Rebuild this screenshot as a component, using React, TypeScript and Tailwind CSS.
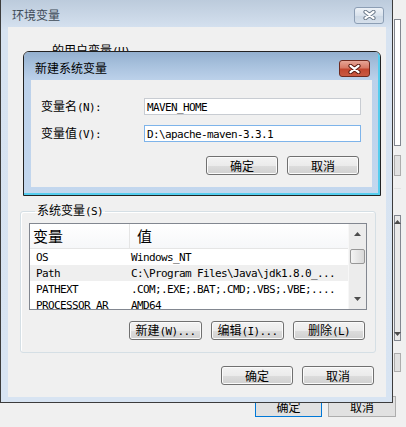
import React from "react";

const CJK = /[\u3000-\u303f\u4e00-\u9fff\uff00-\uffef]/;
const RUNS = /[\u3000-\u303f\u4e00-\u9fff\uff00-\uffef]+|[^\u3000-\u303f\u4e00-\u9fff\uff00-\uffef]+/g;

// SimSun-like text: CJK at 12px, ASCII half width (6px per char)
function T({
  s,
  cjk = "text-[12px]",
  mono = "text-[11px] tracking-[-0.62px]",
}: {
  s: string;
  cjk?: string;
  mono?: string;
}) {
  const parts = s.match(RUNS) ?? [];
  return (
    <span className="whitespace-pre leading-[12px]">
      {parts.map((p, i) =>
        CJK.test(p) ? (
          <span key={i} className={`font-['Noto_Sans_CJK_SC','Noto_Sans',sans-serif] ${cjk}`}>
            {p}
          </span>
        ) : (
          <span key={i} className={`font-['DejaVu_Sans_Mono','Liberation_Mono',monospace] ${mono}`}>
            {p}
          </span>
        )
      )}
    </span>
  );
}

function Btn({ label, w }: { label: string; w: string }) {
  return (
    <button
      type="button"
      className={`${w} h-[19px] rounded-[3px] border border-[#707070] bg-[linear-gradient(#f3f3f3_0%,#ebebeb_50%,#dddddd_50%,#d0d0d0_100%)] shadow-[inset_0_0_0_1px_#fbfbfb] flex items-center justify-center text-black`}
    >
      <T s={label} />
    </button>
  );
}

function CloseX({ dark, light }: { dark: string; light: string }) {
  return (
    <svg width="13" height="10" viewBox="0 0 13 10">
      <path d="M2.5 1.8 L10.5 8.2 M10.5 1.8 L2.5 8.2" stroke={dark} strokeWidth="4.2" strokeLinecap="round" />
      <path d="M2.5 1.8 L10.5 8.2 M10.5 1.8 L2.5 8.2" stroke={light} strokeWidth="2.2" strokeLinecap="round" />
    </svg>
  );
}

function Arrow({ up }: { up?: boolean }) {
  return (
    <svg width="7" height="4" viewBox="0 0 7 4">
      <path d={up ? "M0 4 L3.5 0 L7 4Z" : "M0 0 L3.5 4 L7 0Z"} fill="#4d4d4d" />
    </svg>
  );
}

const rows = [
  { name: "OS", value: "Windows_NT" },
  { name: "Path", value: "C:\\Program Files\\Java\\jdk1.8.0_...", sel: true },
  { name: "PATHEXT", value: ".COM;.EXE;.BAT;.CMD;.VBS;.VBE;...." },
  { name: "PROCESSOR_AR", value: "AMD64" },
];

function BackWindow() {
  return (
    <div className="absolute inset-0 bg-[#f0f0f0]">
      <div className="ml-[394px] w-[7px] pt-[19px] flex flex-col">
        <div className="h-[127px] border border-[#828790] bg-white" />
        <div className="mt-[9px] h-[21px] border border-[#adadad] bg-[#e1e1e1]" />
        <div className="mt-[12px] h-px bg-[#e2e2e2]" />
        <div className="mt-[26px] h-[126px] border border-[#828790] bg-[#e9e9e9] flex flex-col items-center justify-between py-[4px]">
          <Arrow up />
          <Arrow />
        </div>
        <div className="mt-[12px] h-[19px] border border-[#adadad] bg-[#e1e1e1]" />
      </div>
      <div className="mt-[24px] flex gap-[6px] pl-[255px]">
        <div className="w-[67px] h-[21px] border border-[#0078d7] bg-[#e1e1e1] flex items-center justify-center">
          <T s="确定" />
        </div>
        <div className="w-[68px] h-[21px] border border-[#adadad] bg-[#e1e1e1] flex items-center justify-center">
          <T s="取消" />
        </div>
      </div>
    </div>
  );
}

function EnvDialog() {
  return (
    <div className="absolute left-0 top-0 w-[393px] h-[403px] border-x border-b border-[#3c3c3c] bg-[linear-gradient(180deg,#bccbdc_0px,#ccd9e8_18px,#d7e3f1_30px,#d8e4f2_100%)] flex flex-col">
      <div className="h-[27px] flex items-center justify-between pl-[11px] pr-[8px]">
        <span className="mt-[3px] text-[#3f4b58]">
          <T s="环境变量" />
        </span>
        <div className="mt-[3px] w-[30px] h-[17px] rounded-[3px] border border-[#8c9eb4] bg-[linear-gradient(#edf2f7,#d9e2ec_50%,#cbd7e4_51%,#d6e0eb)] flex items-center justify-center">
          <CloseX dark="#6f7d8d" light="#ffffff" />
        </div>
      </div>
      <div className="ml-[7px] w-[378px] h-[370px] bg-[#f0f0f0]">
        <div className="h-[29px] pt-[17px] pl-[44px]">
          <T s="的用户变量(U)" />
        </div>
        <fieldset className="mt-[148px] ml-[12px] w-[356px] rounded-[3px] border border-[#d5dfe5] shadow-[inset_1px_1px_0_#ffffff] px-[8px] pt-[5px] pb-[12px]">
          <legend className="ml-[6px] px-[2px] leading-[12px]">
            <T s="系统变量(S)" />
          </legend>
          <div className="h-[87px] border border-[#828790] bg-white flex overflow-hidden">
            <div className="flex-1 flex flex-col">
              <div className="h-[25px] shrink-0 flex border-b border-[#e5e5e5] bg-[linear-gradient(#ffffff,#f6f7f9)]">
                <div className="w-[100px] border-r border-[#e5e5e5] pl-[3px] flex items-center">
                  <T s="变量" cjk="text-[15px]" />
                </div>
                <div className="flex-1 pl-[7px] flex items-center">
                  <T s="值" cjk="text-[15px]" />
                </div>
              </div>
              {rows.map((r) => (
                <div key={r.name} className={`h-[16px] shrink-0 flex items-center ${r.sel ? "bg-[#efefef]" : ""}`}>
                  <div className="w-[100px] pl-[6px]">
                    <T s={r.name} />
                  </div>
                  <div className="flex-1 pl-[1px]">
                    <T s={r.value} />
                  </div>
                </div>
              ))}
            </div>
            <div className="w-[18px] bg-[#ececec] border-l border-[#f7f7f7] flex flex-col items-center">
              <div className="h-[20px] flex items-center">
                <Arrow up />
              </div>
              <div className="mt-[5px] w-[15px] h-[15px] rounded-[2px] border border-[#979797] bg-[linear-gradient(90deg,#f4f4f4,#e6e6e6_50%,#d9d9d9)]" />
              <div className="flex-1" />
              <div className="h-[20px] flex items-center">
                <Arrow />
              </div>
            </div>
          </div>
          <div className="mt-[11px] flex justify-end gap-[9px] pr-[2px]">
            <Btn label="新建(W)..." w="w-[73px]" />
            <Btn label="编辑(I)..." w="w-[73px]" />
            <Btn label="删除(L)" w="w-[72px]" />
          </div>
        </fieldset>
        <div className="mt-[13px] flex justify-end gap-[9px] pr-[12px]">
          <Btn label="确定" w="w-[72px]" />
          <Btn label="取消" w="w-[72px]" />
        </div>
      </div>
    </div>
  );
}

function NewVarDialog() {
  return (
    <div className="absolute left-[23px] top-[51px] w-[358px] h-[145px] rounded-t-[6px] border border-[#222222] overflow-hidden">
      <div className="h-full border-r-2 border-b-2 border-[#55cdee] bg-[linear-gradient(180deg,#94b0cf_0px,#a9c2de_14px,#bcd1ea_28px,#c3d7ee_100%)] flex flex-col">
        <div className="h-[28px] flex items-center justify-between pl-[11px] pr-[8px]">
          <span className="mt-[3px]">
            <T s="新建系统变量" />
          </span>
          <div className="mt-[5px] w-[31px] h-[17px] rounded-[3px] border border-[#6e2a1f] bg-[linear-gradient(#e6a596,#d77a66_45%,#c2462f_55%,#c95a43)] flex items-center justify-center">
            <CloseX dark="#5b1c12" light="#ffffff" />
          </div>
        </div>
        <div className="ml-[7px] w-[341px] h-[107px] bg-[#f0f0f0] pt-[18px]">
          <div className="flex items-center">
            <div className="w-[113px] pl-[10px]">
              <T s="变量名(N):" />
            </div>
            <div className="w-[217px] h-[17px] border border-[#c8ccd2] bg-white pl-[2px] flex items-center">
              <T s="MAVEN_HOME" />
            </div>
          </div>
          <div className="mt-[10px] flex items-center">
            <div className="w-[113px] pl-[10px]">
              <T s="变量值(V):" />
            </div>
            <div className="w-[217px] h-[17px] border border-[#7eb4ea] bg-white pl-[2px] flex items-center">
              <T s={"D:\\apache-maven-3.3.1"} />
            </div>
          </div>
          <div className="mt-[14px] flex justify-end gap-[9px] pr-[13px]">
            <Btn label="确定" w="w-[72px]" />
            <Btn label="取消" w="w-[72px]" />
          </div>
        </div>
      </div>
    </div>
  );
}

export default function App() {
  return (
    <div className="relative w-[406px] h-[427px] overflow-hidden bg-[#f0f0f0] text-black select-none font-['Noto_Sans_CJK_SC','Noto_Sans',sans-serif] text-[12px] leading-[12px]">
      <BackWindow />
      <EnvDialog />
      <NewVarDialog />
    </div>
  );
}
